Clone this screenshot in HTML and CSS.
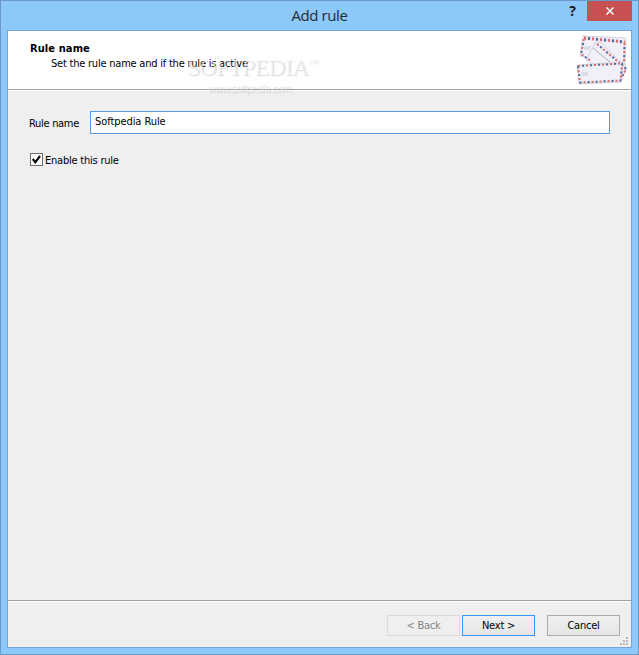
FILE: index.html
```html
<!DOCTYPE html>
<html lang="en">
<head>
<meta charset="utf-8">
<title>Add rule</title>
<link rel="stylesheet" href="styles.css">
</head>
<body>
<div class="window">
  <div class="titlebar">
    <h1 class="title">Add rule</h1>
    <span class="help">?</span>
    <button class="close" aria-label="Close"><svg width="8" height="8" viewBox="0 0 8 8"><path d="M.5.5l7 7M7.500.5l-7 7" stroke="#fff" stroke-width="1.500"/></svg></button>
  </div>
  <div class="client">
    <header class="header">
      <div class="heading">
        <h2 class="step">Rule name</h2>
        <p class="hint">Set the rule name and if the rule is active</p>
      </div>
      <svg class="mail" width="52" height="52" viewBox="0 0 52 52">
        <g fill="#f1f0f8" stroke="#c9c8d2" stroke-width=".8">
          <path d="M7 1L50 3L49 30L4 21Z"/>
          <path d="M19 8L24 7L51 33L43 48L10 25Z"/>
        </g>
        <g fill="none" stroke-width="2">
          <g stroke="#dd6c74" stroke-dasharray="2.200 5.800">
            <path d="M8 3L49 7" stroke-width="3"/><path d="M8 4L5 19L15 26"/><path d="M48.500 8L48 27"/>
            <path d="M21 9L46 30L50 34L44 46"/>
          </g>
          <g stroke="#5468a4" stroke-dasharray="2.200 5.800" stroke-dashoffset="-4">
            <path d="M8 3L49 7" stroke-width="3"/><path d="M8 4L5 19L15 26"/><path d="M48.500 8L48 27"/>
            <path d="M21 9L46 30L50 34L44 46"/>
          </g>
        </g>
        <path d="M1 30L47 27L45 47L3 49Z" fill="#f1f0f8" stroke="#c9c8d2" stroke-width=".8"/>
        <g fill="none" stroke-width="2">
          <path d="M2 31L46 28.500L44.500 45.500L4 47.500Z" stroke="#dd6c74" stroke-dasharray="2.200 5.800"/>
          <path d="M2 31L46 28.500L44.500 45.500L4 47.500Z" stroke="#5468a4" stroke-dasharray="2.200 5.800" stroke-dashoffset="-4"/>
        </g>
        <path d="M17 13L34 27" fill="none" stroke="#a9adc4" stroke-width="1"/>
        <path d="M8 12h7M8 14h6M5 38h7M5 40h7" stroke="#c2c7de" stroke-width="1"/>
      </svg>
      <div class="watermark"><span class="brand">SOFTPEDIA<span class="tm">™</span></span><span class="site">www.softpedia.com</span></div>
    </header>
    <main class="body">
      <div class="field">
        <label class="label">Rule name</label>
        <div class="input">Softpedia Rule</div>
      </div>
      <div class="check">
        <span class="box"><svg width="11" height="11" viewBox="0 0 11 11"><path d="M1.800 5L4.300 8.300L9 2" fill="none" stroke="#000" stroke-width="2.100"/></svg></span>
        <span class="check-text">Enable this rule</span>
      </div>
    </main>
    <footer class="footer">
      <button class="btn disabled">&lt; Back</button>
      <button class="btn primary">Next &gt;</button>
      <button class="btn cancel">Cancel</button>
      <svg class="grip" width="8" height="8" viewBox="0 0 8 8" fill="#b9b9b9"><path d="M6 0h2v2h-2zM3 3h2v2h-2zM6 3h2v2h-2zM0 6h2v2h-2zM3 6h2v2h-2zM6 6h2v2h-2z"/></svg>
    </footer>
  </div>
</div>
</body>
</html>
```
FILE: styles.css
```css
* { box-sizing: border-box; }
body { margin: 0; font: 11px/14px "DejaVu Sans Condensed", "DejaVu Sans", sans-serif; letter-spacing: -.22px; color: #000; }
h1, h2, p { margin: 0; font-weight: normal; }
button { font: inherit; letter-spacing: inherit; padding: 0; border: 0; }
svg { display: block; }
.window { width: 639px; height: 655px; border: 1px solid #6c99c5; background: #8dc8fb; padding: 0 6px 6px; display: flex; flex-direction: column; }
.titlebar { height: 29px; flex: none; position: relative; display: flex; justify-content: flex-end; align-items: flex-start; }
.title { position: absolute; left: 0; right: 0; top: 4px; text-align: center; font: 15px/20px "Open Sans", sans-serif; color: #1f2a36; letter-spacing: -.4px; }
.help { font: bold 14px/20px "Open Sans", sans-serif; width: 9px; margin-right: 10px; color: #1a1a1a; text-align: center; }
.close { width: 45px; height: 20px; background: #c75050; display: flex; align-items: center; justify-content: center; }
.client { flex: 1; border: 1px solid #74a8db; background: #efefef; display: flex; flex-direction: column; }
.header { height: 59px; flex: none; position: relative; background: #fff; border-bottom: 1px solid #a0a0a0; box-shadow: 0 1px #fff; display: flex; justify-content: space-between; padding: 4px 3px 0 22px; }
.heading { padding-top: 7px; }
.step { font-size: 11px; font-weight: bold; letter-spacing: .1px; }
.hint { margin: 1px 0 0 21px; white-space: nowrap; }
.watermark { position: absolute; left: 179px; top: 17px; display: flex; flex-direction: column; color: rgba(255,255,255,.5); text-shadow: 1px 1px 1px rgba(0,0,0,.16); white-space: nowrap; }
.brand { font: 24px/30px "Liberation Serif", serif; letter-spacing: -.9px; }
.tm { font-size: 10px; vertical-align: 9px; }
.site { font: 10px/14px "Liberation Sans", sans-serif; letter-spacing: -.2px; margin: 0 0 0 21px; }
.body { flex: 1; padding: 21px 21px 0; }
.field { display: flex; align-items: center; height: 23px; }
.label { width: 61px; padding-top: 2px; letter-spacing: -.3px; }
.input { flex: 1; height: 23px; border: 1px solid #569de5; background: #fff; padding: 3px 4px; letter-spacing: -.07px; }
.check { display: flex; align-items: center; margin: 19px 0 0 1px; height: 13px; gap: 2px; }
.box { width: 13px; height: 13px; border: 1px solid #707070; background: #fff; }
.check-text { padding-top: 2px; }
.footer { position: relative; height: 47px; flex: none; border-top: 1px solid #a0a0a0; box-shadow: inset 0 1px #fff; display: flex; justify-content: flex-end; padding: 14px 11px 0 0; gap: 2px; }
.btn { width: 73px; height: 21px; padding-top: 1px; border: 1px solid #acacac; background: linear-gradient(#f0f0f0, #e5e5e5); color: #000; }
.btn.disabled { border-color: #d9d9d9; background: #efefef; color: #838383; }
.btn.primary { border-color: #3399ff; }
.btn.cancel { margin-left: 10px; }
.grip { position: absolute; right: 3px; bottom: 2px; }
```
